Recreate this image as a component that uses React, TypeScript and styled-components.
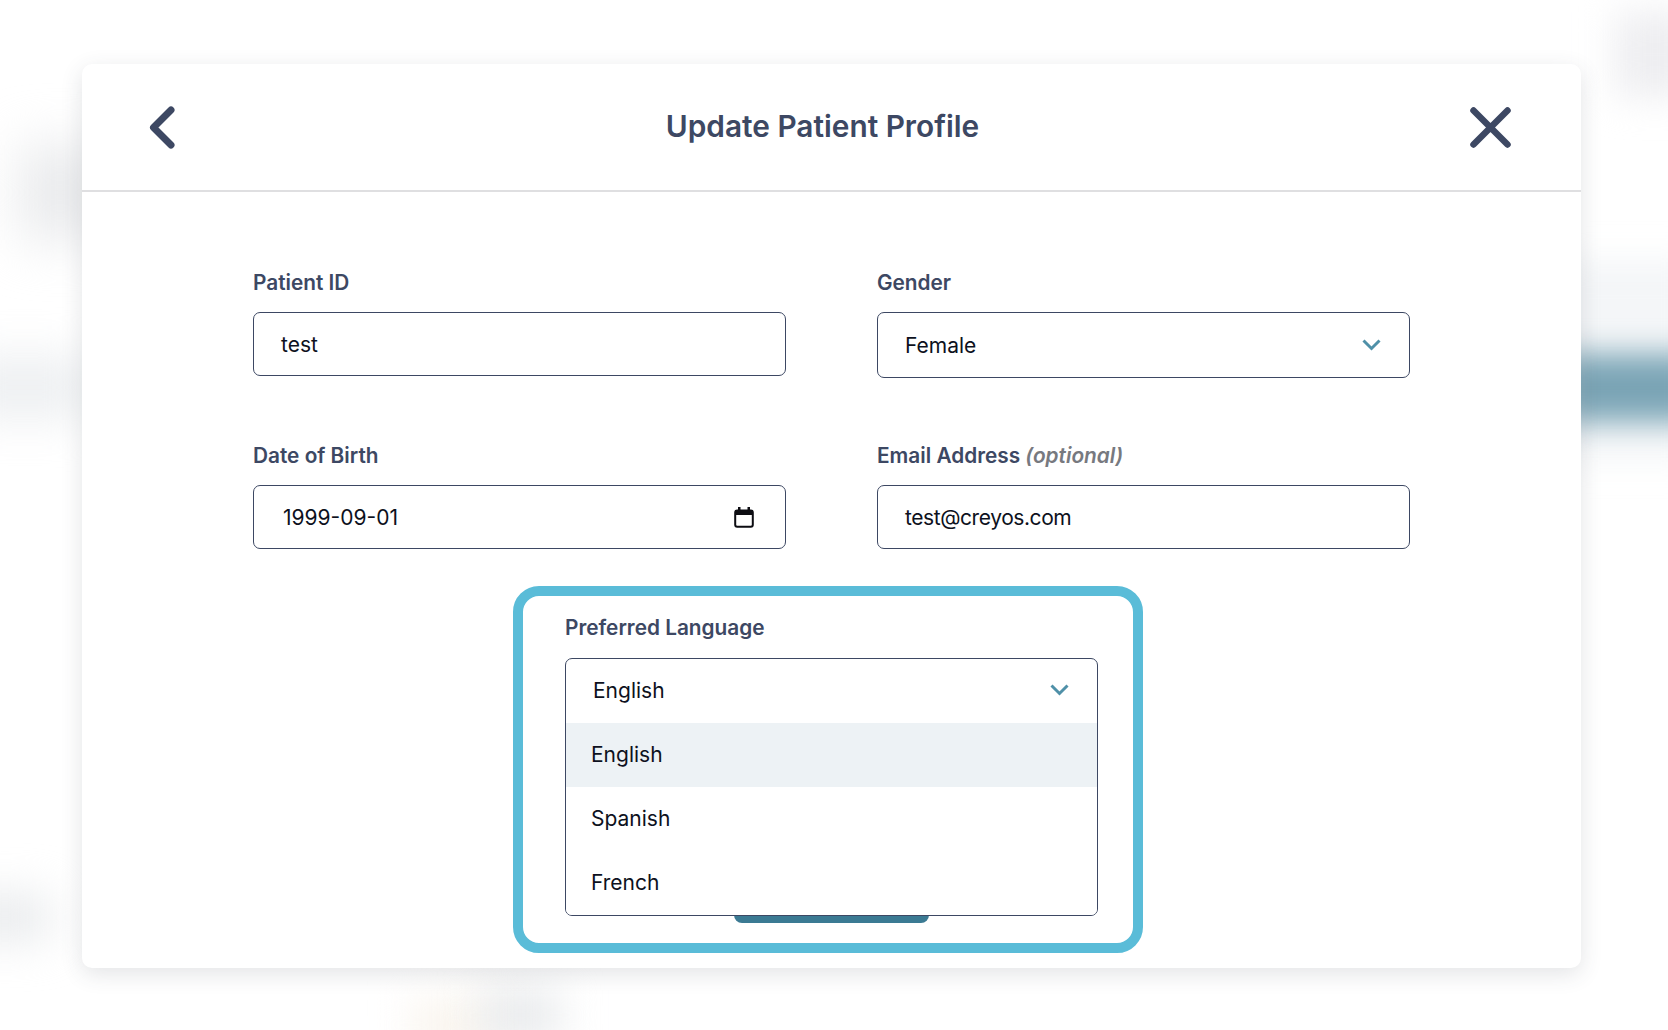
import { createGlobalStyle, styled } from "styled-components";

const GlobalStyle = createGlobalStyle`
  html, body {
    margin: 0;
    padding: 0;
    background: #ffffff;
    font-family: "Inter", "Liberation Sans", sans-serif;
  }
  * {
    box-sizing: border-box;
  }
`;

const Page = styled.div`
  position: relative;
  width: 1668px;
  height: 1030px;
  overflow: hidden;
  padding: 64px 87px 0 82px;
  background: #ffffff;
`;

const Blob = styled.div<{ $x: number; $y: number; $w: number; $h: number; $color: string; $blur: number }>`
  position: absolute;
  left: ${(p) => p.$x}px;
  top: ${(p) => p.$y}px;
  width: ${(p) => p.$w}px;
  height: ${(p) => p.$h}px;
  background: ${(p) => p.$color};
  filter: blur(${(p) => p.$blur}px);
`;

const Modal = styled.div`
  position: relative;
  width: 1499px;
  height: 904px;
  background: #ffffff;
  border-radius: 10px;
  box-shadow: 0 6px 22px rgba(60, 66, 80, 0.14);
`;

const Header = styled.header`
  display: flex;
  align-items: center;
  justify-content: space-between;
  height: 128px;
  padding: 0 70px 0 67px;
  border-bottom: 2px solid #dfdfe1;
`;

const Title = styled.h1`
  margin: 0 0 2px;
  font-size: 29.8px;
  font-weight: 600;
  color: #3d4863;
`;

const Body = styled.div`
  padding: 77px 0 0 171px;
`;

const FormGrid = styled.div`
  display: grid;
  grid-template-columns: 533px 533px;
  column-gap: 91px;
  row-gap: 64px;
`;

const Field = styled.div`
  display: flex;
  flex-direction: column;
  gap: 16px;
`;

const Label = styled.label`
  font-size: 20.8px;
  line-height: 27px;
  height: 27px;
  font-weight: 600;
  color: #3d4863;

  em {
    font-weight: 600;
    color: #77797f;
  }
`;

const InputBox = styled.div<{ $tall?: boolean; $iconInset?: number }>`
  display: flex;
  align-items: center;
  justify-content: space-between;
  height: ${(p) => (p.$tall ? 66 : 64)}px;
  padding: 0 ${(p) => p.$iconInset ?? 28}px 0 27px;
  border: 1.5px solid #3d4863;
  border-radius: 7px;
  background: #ffffff;
  font-size: 21px;
  color: #0d1120;
`;

const DateText = styled.span`
  margin-left: 2px;
`;

const EmailText = styled.span`
  letter-spacing: -0.42px;
`;

const Highlight = styled.div`
  position: relative;
  width: 630px;
  height: 367px;
  margin: 37px 0 0 260px;
  padding: 18px 0 0 42px;
  border: 10px solid #5abcd8;
  border-radius: 26px;
  background: #ffffff;
`;

const LanguageField = styled(Field)`
  width: 533px;
  gap: 17px;
`;

const Dropdown = styled.div`
  position: relative;
  z-index: 1;
  height: 258px;
  border: 1.5px solid #3d4863;
  border-radius: 7px;
  background: #ffffff;
  overflow: hidden;
`;

const DropdownValue = styled.div`
  display: flex;
  align-items: center;
  justify-content: space-between;
  height: 64px;
  padding: 0 28px 2px 27px;
  font-size: 21px;
  color: #0d1120;
`;

const Option = styled.div<{ $active?: boolean }>`
  display: flex;
  align-items: center;
  height: 64px;
  padding: 0 0 2px 25px;
  font-size: 21px;
  color: #0d1120;
  background: ${(p) => (p.$active ? "#edf2f5" : "#ffffff")};
`;

const SubmitPeek = styled.div`
  position: absolute;
  left: 211px;
  bottom: 20px;
  width: 195px;
  height: 20px;
  border-radius: 0 0 8px 8px;
  background: #3b7a93;
`;

const BackIcon = () => (
  <svg width="26" height="43" viewBox="0 0 26 43" fill="none">
    <path d="M22 4 L4.5 21.5 L22 39" stroke="#3d4863" strokeWidth="7" strokeLinecap="round" strokeLinejoin="round" />
  </svg>
);

const CloseIcon = () => (
  <svg width="41" height="41" viewBox="0 0 41 41" fill="none">
    <path d="M3.5 3.5 L37.5 37.5 M37.5 3.5 L3.5 37.5" stroke="#3d4863" strokeWidth="6.5" strokeLinecap="round" />
  </svg>
);

const Chevron = () => (
  <svg width="19" height="12" viewBox="0 0 19 12" fill="none">
    <path d="M1.5 1.5 L9.5 9.5 L17.5 1.5" stroke="#4f90a8" strokeWidth="3" />
  </svg>
);

const CalendarIcon = () => (
  <svg width="20" height="21" viewBox="0 0 20 21" fill="none">
    <rect x="1.2" y="3.5" width="17.6" height="16.3" rx="2" stroke="#0d0d12" strokeWidth="2" />
    <rect x="1" y="3" width="18" height="5" fill="#0d0d12" />
    <rect x="4" y="0" width="2.5" height="4" fill="#0d0d12" />
    <rect x="13.5" y="0" width="2.5" height="4" fill="#0d0d12" />
  </svg>
);

export default function App() {
  return (
    <Page>
      <GlobalStyle />
      <Blob $x={20} $y={145} $w={80} $h={95} $color="#e9eaec" $blur={26} />
      <Blob $x={-40} $y={355} $w={130} $h={65} $color="#eef0f2" $blur={22} />
      <Blob $x={-40} $y={895} $w={90} $h={45} $color="#e8eaec" $blur={22} />
      <Blob $x={410} $y={1000} $w={90} $h={50} $color="#faf5ee" $blur={20} />
      <Blob $x={480} $y={990} $w={80} $h={50} $color="#e8eaec" $blur={20} />
      <Blob $x={1615} $y={12} $w={80} $h={85} $color="#eeeef1" $blur={18} />
      <Blob $x={1560} $y={260} $w={140} $h={200} $color="#f4f6f8" $blur={16} />
      <Blob $x={1560} $y={354} $w={140} $h={68} $color="#7aa4b5" $blur={15} />

      <Modal>
        <Header>
          <BackIcon />
          <Title>Update Patient Profile</Title>
          <CloseIcon />
        </Header>
        <Body>
          <FormGrid>
            <Field>
              <Label>Patient ID</Label>
              <InputBox>test</InputBox>
            </Field>
            <Field>
              <Label>Gender</Label>
              <InputBox $tall>
                Female
                <Chevron />
              </InputBox>
            </Field>
            <Field>
              <Label>Date of Birth</Label>
              <InputBox $iconInset={31}>
                <DateText>1999-09-01</DateText>
                <CalendarIcon />
              </InputBox>
            </Field>
            <Field>
              <Label>
                Email Address <em>(optional)</em>
              </Label>
              <InputBox>
                <EmailText>test@creyos.com</EmailText>
              </InputBox>
            </Field>
          </FormGrid>
          <Highlight>
            <LanguageField>
              <Label>Preferred Language</Label>
              <Dropdown>
                <DropdownValue>
                  English
                  <Chevron />
                </DropdownValue>
                <Option $active>English</Option>
                <Option>Spanish</Option>
                <Option>French</Option>
              </Dropdown>
            </LanguageField>
            <SubmitPeek />
          </Highlight>
        </Body>
      </Modal>
    </Page>
  );
}
